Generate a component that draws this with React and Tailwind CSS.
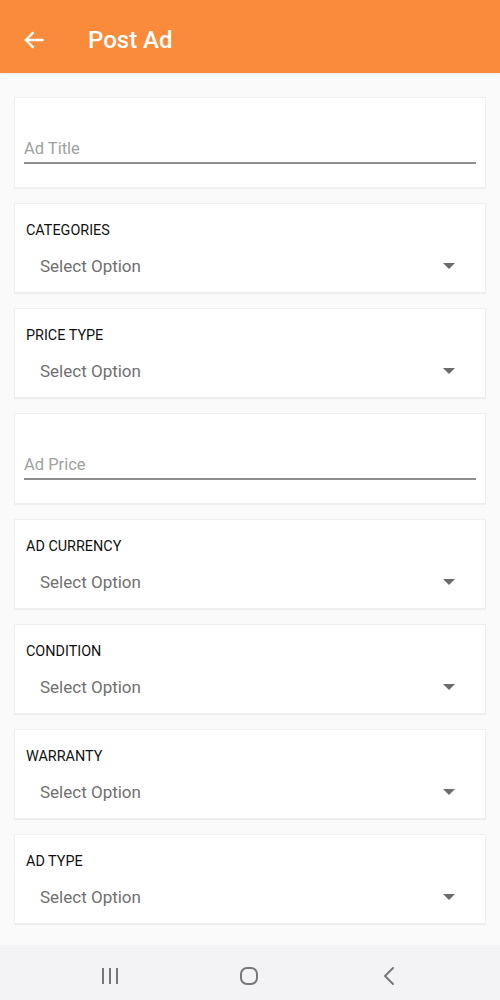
import React from "react";

function Arrow() {
  return (
    <svg width="26" height="26" viewBox="0 0 24 24" fill="none" stroke="white" strokeWidth="2.2" strokeLinecap="round" strokeLinejoin="round">
      <path d="M20 12H4.5" />
      <path d="M11 5.5L4.5 12l6.5 6.5" />
    </svg>
  );
}

function TextCard({ placeholder }) {
  return (
    <div className="bg-white border border-[#efefef] shadow-[0_1px_1px_rgba(0,0,0,0.04)] h-[91px] px-[9px] pt-[39px]">
      <div className="h-[24px] flex items-center text-[16.5px] text-[#a0a0a0] leading-none">{placeholder}</div>
      <div className="mt-[1px] h-[1.5px] bg-[#8e8e8e]" />
    </div>
  );
}

function SelectCard({ label }) {
  return (
    <div className="bg-white border border-[#efefef] shadow-[0_1px_1px_rgba(0,0,0,0.05)] h-[90px] pt-[19px]">
      <div className="pl-[11px] text-[14.4px] leading-[16px] text-[#111]">{label}</div>
      <div className="mt-[15px] h-[24px] flex items-center justify-between pl-[25px] pr-[30px]">
        <span className="text-[17px] text-[#707070] leading-none">Select Option</span>
        <svg width="12" height="6" viewBox="0 0 12 6"><path d="M0 0h12L6 6z" fill="#6b6b6b" /></svg>
      </div>
    </div>
  );
}

export default function App() {
  return (
    <div className="w-[500px] h-[1000px] flex flex-col bg-[#fafafa] overflow-hidden" style={{ fontFamily: "Roboto, 'Liberation Sans', sans-serif" }}>
      <div className="h-[73px] bg-[#f98b3a] flex items-center pl-[21px] pt-[7px] shadow-[0_1px_2px_rgba(0,0,0,0.08)] shrink-0">
        <Arrow />
        <span className="ml-[41px] text-white text-[24px] font-medium leading-none">Post Ad</span>
      </div>
      <div className="flex-1 flex flex-col gap-[15px] px-[14px] pt-[24px]">
        <TextCard placeholder="Ad Title" />
        <SelectCard label="CATEGORIES" />
        <SelectCard label="PRICE TYPE" />
        <TextCard placeholder="Ad Price" />
        <SelectCard label="AD CURRENCY" />
        <SelectCard label="CONDITION" />
        <SelectCard label="WARRANTY" />
        <SelectCard label="AD TYPE" />
      </div>
      <div className="h-[55px] bg-[#f3f3f6] flex items-center pl-[100px] pt-[7px] shrink-0">
        <svg width="20" height="18" viewBox="0 0 20 18" fill="none" stroke="#777" strokeWidth="2">
          <path d="M3 1v16M10 1v16M17 1v16" />
        </svg>
        <svg className="ml-[119px]" width="20" height="20" viewBox="0 0 20 20" fill="none" stroke="#777" strokeWidth="2">
          <rect x="2" y="2" width="16" height="16" rx="6" />
        </svg>
        <svg className="ml-[123px]" width="14" height="20" viewBox="0 0 14 20" fill="none" stroke="#777" strokeWidth="2" strokeLinecap="round" strokeLinejoin="round">
          <path d="M11 2L3 10l8 8" />
        </svg>
      </div>
    </div>
  );
}
